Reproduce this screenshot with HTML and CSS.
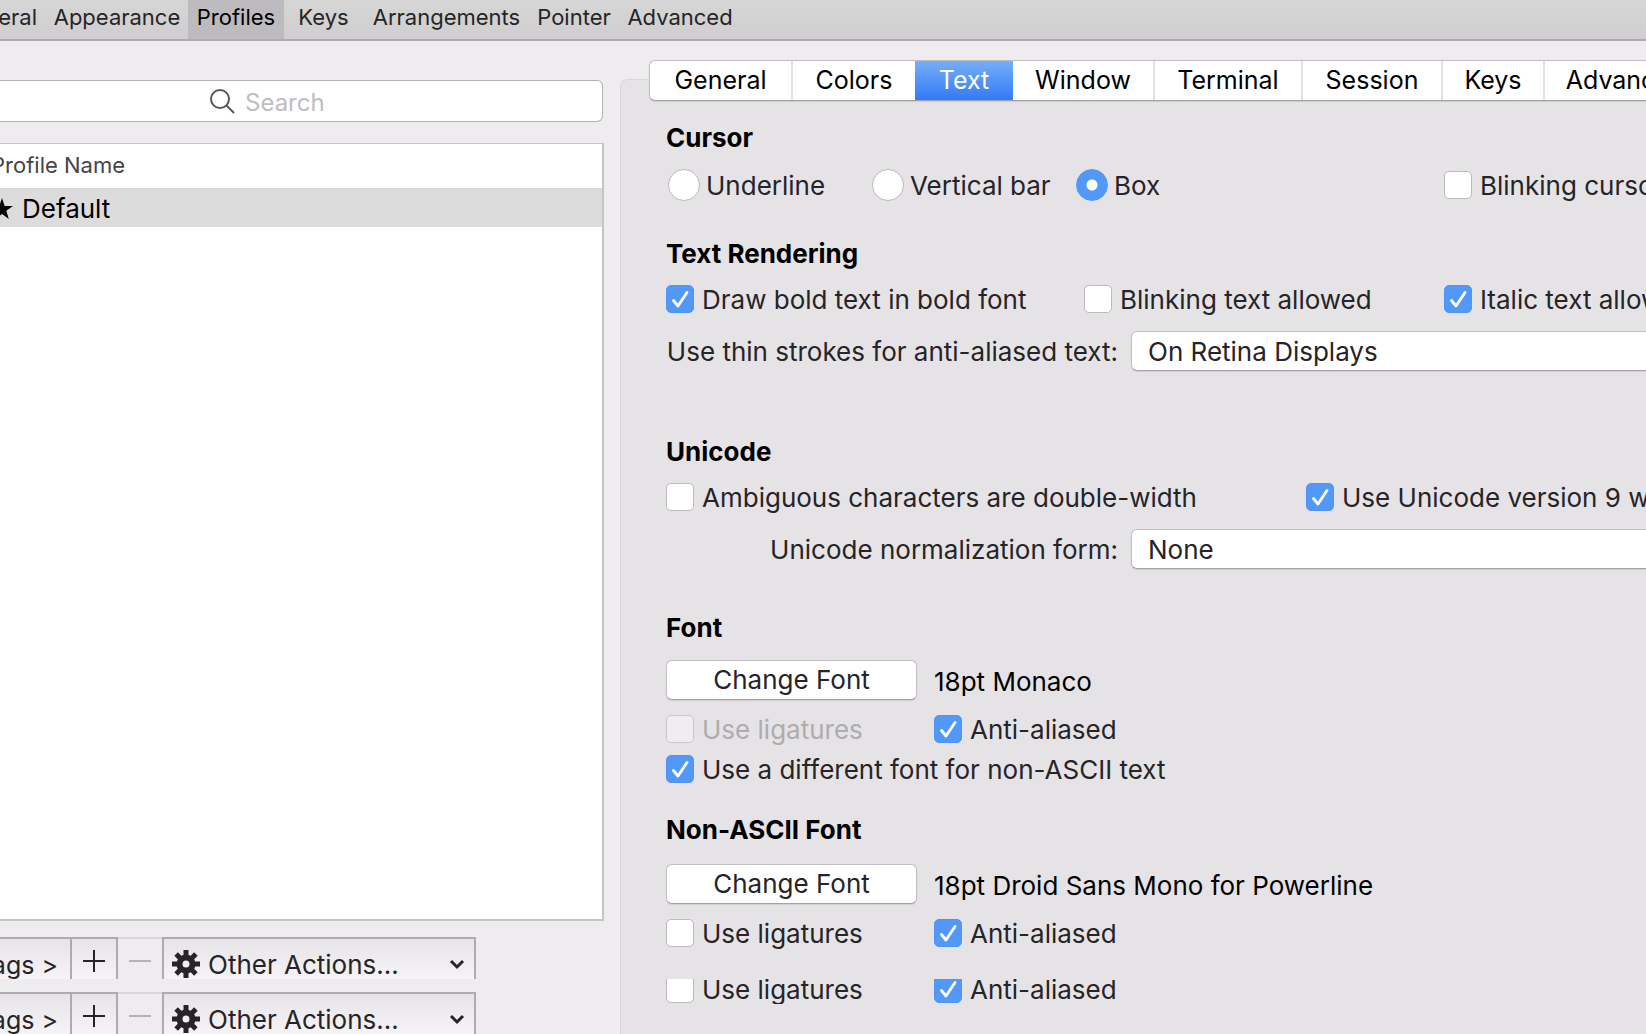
FILE: index.html
```html
<!DOCTYPE html>
<html lang="en">
<head>
<meta charset="utf-8">
<title>Preferences</title>
<link rel="stylesheet" href="styles.css">
</head>
<body>
<svg class="sprites" aria-hidden="true">
  <symbol id="plus" viewBox="0 0 24 24"><path d="M12 1v22M1 12h22" stroke="currentColor" stroke-width="2"/></symbol>
  <symbol id="minus" viewBox="0 0 24 24"><path d="M1 12h22" stroke="currentColor" stroke-width="2"/></symbol>
  <symbol id="gear" viewBox="0 0 28 28">
    <g fill="currentColor">
      <path fill-rule="evenodd" d="M14 4.500a9.500 9.500 0 1 0 0 19a9.500 9.500 0 1 0 0-19zm0 6a3.500 3.500 0 1 1 0 7a3.500 3.500 0 1 1 0-7z"/>
      <rect x="11.500" y="0" width="5" height="7"/><rect x="11.500" y="21" width="5" height="7"/>
      <rect x="0" y="11.500" width="7" height="5"/><rect x="21" y="11.500" width="7" height="5"/>
      <g transform="rotate(45 14 14)">
        <rect x="11.500" y="0" width="5" height="7"/><rect x="11.500" y="21" width="5" height="7"/>
        <rect x="0" y="11.500" width="7" height="5"/><rect x="21" y="11.500" width="7" height="5"/>
      </g>
    </g>
  </symbol>
  <symbol id="chevron" viewBox="0 0 16 16"><path d="M2 5l6 6 6-6" fill="none" stroke="currentColor" stroke-width="3"/></symbol>
</svg>

<nav class="toolbar">
  <button class="tool tool-first">General</button>
  <button class="tool">Appearance</button>
  <button class="tool tool-active">Profiles</button>
  <button class="tool">Keys</button>
  <button class="tool">Arrangements</button>
  <button class="tool">Pointer</button>
  <button class="tool">Advanced</button>
</nav>

<main class="content">
  <aside class="sidebar">
    <label class="search">
      <svg class="search-icon" viewBox="0 0 26 26"><circle cx="11" cy="11" r="9" fill="none" stroke="#58565a" stroke-width="2"/><path d="M17.500 17.500L25 25" stroke="#58565a" stroke-width="2"/></svg>
      <input class="search-input" type="search" placeholder="Search" aria-label="Search">
    </label>
    <div class="list">
      <table class="profiles">
        <thead><tr><th><span class="cell">Profile Name</span></th></tr></thead>
        <tbody><tr><td><span class="cell"><svg class="star" viewBox="0 0 20 20"><path d="M10 0l2.400 7.200H20l-6.100 4.500L16.200 19 10 14.500 3.800 19l2.300-7.300L0 7.200h7.600z"/></svg>Default</span></td></tr></tbody>
      </table>
    </div>
    <div class="actions">
      <button class="action action-tags">Tags &gt;</button>
      <button class="action action-add" aria-label="Add profile"><svg class="icon"><use href="#plus"/></svg></button>
      <button class="action action-remove" aria-label="Remove profile" disabled><svg class="icon"><use href="#minus"/></svg></button>
      <button class="action action-other"><svg class="gear"><use href="#gear"/></svg><span class="action-label">Other Actions...</span><svg class="chevron"><use href="#chevron"/></svg></button>
    </div>
    <div class="actions">
      <button class="action action-tags">Tags &gt;</button>
      <button class="action action-add" aria-label="Add profile"><svg class="icon"><use href="#plus"/></svg></button>
      <button class="action action-remove" aria-label="Remove profile" disabled><svg class="icon"><use href="#minus"/></svg></button>
      <button class="action action-other"><svg class="gear"><use href="#gear"/></svg><span class="action-label">Other Actions...</span><svg class="chevron"><use href="#chevron"/></svg></button>
    </div>
  </aside>

  <section class="detail">
    <div class="tabs">
      <button class="tab">General</button>
      <button class="tab">Colors</button>
      <button class="tab tab-active">Text</button>
      <button class="tab">Window</button>
      <button class="tab">Terminal</button>
      <button class="tab">Session</button>
      <button class="tab">Keys</button>
      <button class="tab">Advanced</button>
    </div>
    <div class="panel">
      <section class="group">
        <h2 class="heading">Cursor</h2>
        <div class="row row-cursor">
          <label class="option option-radio"><input class="radio" type="radio" name="cursor">Underline</label>
          <label class="option option-radio"><input class="radio" type="radio" name="cursor">Vertical bar</label>
          <label class="option option-radio"><input class="radio" type="radio" name="cursor" checked>Box</label>
          <label class="option"><input class="check" type="checkbox">Blinking cursor</label>
        </div>
      </section>

      <section class="group group-rendering">
        <h2 class="heading">Text Rendering</h2>
        <div class="row row-rendering">
          <label class="option"><input class="check" type="checkbox" checked>Draw bold text in bold font</label>
          <label class="option"><input class="check" type="checkbox">Blinking text allowed</label>
          <label class="option"><input class="check" type="checkbox" checked>Italic text allowed</label>
        </div>
        <div class="field">
          <label class="field-label" for="strokes">Use thin strokes for anti-aliased text:</label>
          <select class="select" id="strokes"><option>On Retina Displays</option></select>
        </div>
      </section>

      <section class="group group-unicode">
        <h2 class="heading">Unicode</h2>
        <div class="row row-unicode">
          <label class="option"><input class="check" type="checkbox">Ambiguous characters are double-width</label>
          <label class="option"><input class="check" type="checkbox" checked>Use Unicode version 9 widths</label>
        </div>
        <div class="field">
          <label class="field-label" for="form">Unicode normalization form:</label>
          <select class="select" id="form"><option>None</option></select>
        </div>
      </section>

      <section class="group group-font">
        <h2 class="heading">Font</h2>
        <div class="row row-font row-button">
          <button class="button">Change Font</button>
          <span class="font-name">18pt Monaco</span>
        </div>
        <div class="row row-font">
          <label class="option option-disabled"><input class="check" type="checkbox" disabled>Use ligatures</label>
          <label class="option"><input class="check" type="checkbox" checked>Anti-aliased</label>
        </div>
        <div class="row row-tight">
          <label class="option"><input class="check" type="checkbox" checked>Use a different font for non-ASCII text</label>
        </div>
      </section>

      <section class="group group-ascii">
        <h2 class="heading">Non-ASCII Font</h2>
        <div class="row row-font row-button">
          <button class="button">Change Font</button>
          <span class="font-name">18pt Droid Sans Mono for Powerline</span>
        </div>
        <div class="row row-font">
          <label class="option"><input class="check" type="checkbox">Use ligatures</label>
          <label class="option"><input class="check" type="checkbox" checked>Anti-aliased</label>
        </div>
        <div class="row row-font row-cut">
          <label class="option"><input class="check" type="checkbox">Use ligatures</label>
          <label class="option"><input class="check" type="checkbox" checked>Anti-aliased</label>
        </div>
      </section>
    </div>
  </section>
</main>
</body>
</html>
```
FILE: styles.css
```css
* { box-sizing: border-box; }

body {
  margin: 0;
  min-height: 100vh;
  display: flex;
  flex-direction: column;
  overflow: hidden;
  background: #eeecee;
  color: #262427;
  font: 26px/32px Inter, "Liberation Sans", sans-serif;
  white-space: nowrap;
}

button, input, select { font: inherit; color: inherit; }
button { margin: 0; padding: 0; border: 0; background: none; }
.sprites { display: none; }

/* Window toolbar */
.toolbar {
  display: grid;
  grid-template-columns: 46px 142px 96px 79px 167px 88px 124px;
  height: 41px;
  border-bottom: 2px solid #aeabae;
  background: linear-gradient(#d6d6d6, #d0ced0);
}
.tool {
  padding-bottom: 6px;
  font-size: 22px;
}
.tool-first {
  display: flex;
  align-items: center;
  justify-content: flex-end;
  padding-right: 9px;
  overflow: hidden;
}
.tool-active { background: #bdbbbd; color: #000; }

.content {
  flex: 1;
  display: grid;
  grid-template-columns: minmax(0, 604px) minmax(0, 1fr);
  gap: 16px;
}

/* Profile list */
.sidebar { display: flex; flex-direction: column; padding-top: 39px; }
.search {
  display: flex;
  align-items: center;
  gap: 10px;
  height: 42px;
  margin-right: 1px;
  padding-left: 209px;
  border: 1px solid #b3b0b3;
  border-left: 0;
  border-radius: 0 6px 6px 0;
  background: #fff;
}
.search-icon { flex: none; width: 26px; height: 26px; }
.search-input {
  flex: 1;
  min-width: 0;
  padding: 3px 0 0;
  border: 0;
  outline: 0;
  background: none;
  font-size: 24px;
  appearance: none;
}
.search-input::placeholder { color: #bfbdbf; opacity: 1; }
.list {
  flex: 1;
  margin-top: 21px;
  border: solid #c5c3c6;
  border-width: 1px 2px 2px 0;
  background: #fff;
  overflow: hidden;
}
.profiles { width: 100%; border-collapse: collapse; }
.profiles th, .profiles td { padding: 0; }
.profiles th {
  height: 44px;
  padding-bottom: 2px;
  font-size: 22px;
  font-weight: 400;
  color: #454346;
  border-bottom: 1px solid #d6d6d6;
}
.profiles td { height: 39px; padding-top: 3px; background: #dcdcdc; color: #000; }
.cell { display: flex; align-items: center; margin-left: -9px; }
.star { width: 22px; height: 22px; margin-right: 9px; }

.actions {
  display: grid;
  grid-template-columns: 72px 46px 44px 314px;
  height: 42px;
  margin-top: 13px;
  overflow: hidden;
}
.list + .actions { margin-top: 16px; }
.action {
  display: flex;
  align-items: center;
  justify-content: center;
  padding-top: 10px;
  border: solid #aeabae;
  border-width: 2px 2px 0 0;
  background: linear-gradient(#e6e4e7, #f6f4f7);
}
.action-tags { justify-content: flex-end; padding-right: 12px; font-size: 25px; }
.action-add { padding-top: 2px; }
.action-remove {
  padding-top: 2px;
  border-color: #d8d6d9;
  border-right-width: 0;
  background: none;
  color: #b5b3b6;
}
.action-other { justify-content: flex-start; padding-left: 8px; border-left-width: 2px; }
.icon { width: 24px; height: 24px; }
.gear { width: 28px; height: 28px; margin: 0 8px 2px 0; }
.action-label { flex: 1; text-align: left; }
.chevron { width: 16px; height: 16px; margin: 0 9px 2px 0; }

/* Profile settings */
.detail { display: flex; flex-direction: column; padding-top: 19px; }
.tabs {
  position: relative;
  display: grid;
  grid-template-columns: 143px 122px 98px 142px 148px 140px 102px 163px;
  height: 41px;
  margin: 0 0 -22px 29px;
  border: 1px solid #bfbdc0;
  border-bottom-color: #a3a1a4;
  border-right: 0;
  border-radius: 6px 0 0 6px;
  background: #fff;
  overflow: hidden;
  box-shadow: 0 1px 1px #cfcdd0;
}
.tab {
  padding-bottom: 2px;
  border-right: 2px solid #e3e1e4;
  color: #000;
  font-size: 25px;
}
.tab-active {
  margin: -1px 0;
  border: 0;
  background: linear-gradient(#78b0f7, #3079f7);
  color: #fff;
}
.tab:has(+ .tab-active) { border-right: 0; }
.panel {
  flex: 1;
  padding: 42px 0 0 45px;
  border: 1px solid #d9d7da;
  border-width: 1px 0 0 1px;
  border-radius: 8px 0 0 0;
  background: #e5e3e6;
  overflow: hidden;
}
.group-rendering { margin-top: 36px; }
.group-unicode { margin-top: 65px; }
.group-font { margin-top: 43px; }
.group-ascii { margin-top: 30px; }
.heading {
  margin: 0;
  color: #000;
  font-size: 26px;
  font-weight: 700;
  line-height: 32px;
}
.row { display: grid; align-items: center; height: 28px; margin-top: 16px; }
.row-cursor { grid-template-columns: 204px 204px 370px 1fr; height: 32px; }
.row-rendering { grid-template-columns: 418px 360px 1fr; }
.row-unicode { grid-template-columns: 640px 1fr; }
.row-font { grid-template-columns: 268px 1fr; }
.row-button { height: 40px; }
.group-ascii .row-button { margin-top: 18px; }
.row-tight { margin-top: 12px; }
.row-cut {
  align-content: end;
  height: 25px;
  margin-top: 31px;
  overflow: hidden;
}
.option { display: flex; align-items: center; gap: 8px; height: 28px; }
.option-radio { gap: 6px; padding-left: 2px; }
.option-disabled { color: #aeacaf; }

.check, .radio {
  flex: none;
  margin: 0 0 2px;
  appearance: none;
  border: 1px solid #bbb9bc;
  background: #fff center / 100% no-repeat;
}
.check { width: 28px; height: 28px; border-radius: 5px; }
.check:checked {
  border-color: #4f95f5;
  background-color: #5298f7;
  background-image: url("data:image/svg+xml,%3Csvg xmlns='http://www.w3.org/2000/svg' viewBox='0 0 26 26'%3E%3Cpath d='M6.500 14.500l4.500 5.500L20 6.500' fill='none' stroke='white' stroke-width='2.800' stroke-linecap='round' stroke-linejoin='round'/%3E%3C/svg%3E");
}
.check:disabled { border-color: #c9c7ca; background-color: #efedf0; }
.radio { width: 32px; height: 32px; border-radius: 50%; }
.radio:checked {
  border-color: #5298f7;
  background: radial-gradient(circle, #fff 5px, #5298f7 6px);
}

.field { display: flex; align-items: center; height: 40px; margin-top: 17px; }
.field-label { width: 452px; margin-right: 13px; padding-top: 2px; text-align: right; }
.select {
  flex: 1;
  height: 40px;
  margin-right: -12px;
  padding: 2px 16px 0;
  appearance: none;
}
.select, .button {
  border: 1px solid #c1bfc2;
  border-bottom-color: #a5a3a6;
  border-radius: 6px;
  background: #fff;
  box-shadow: 0 1px 1px #cfcdd0;
}
.button { width: 251px; height: 40px; }
.font-name { padding-top: 4px; color: #000; }
```
